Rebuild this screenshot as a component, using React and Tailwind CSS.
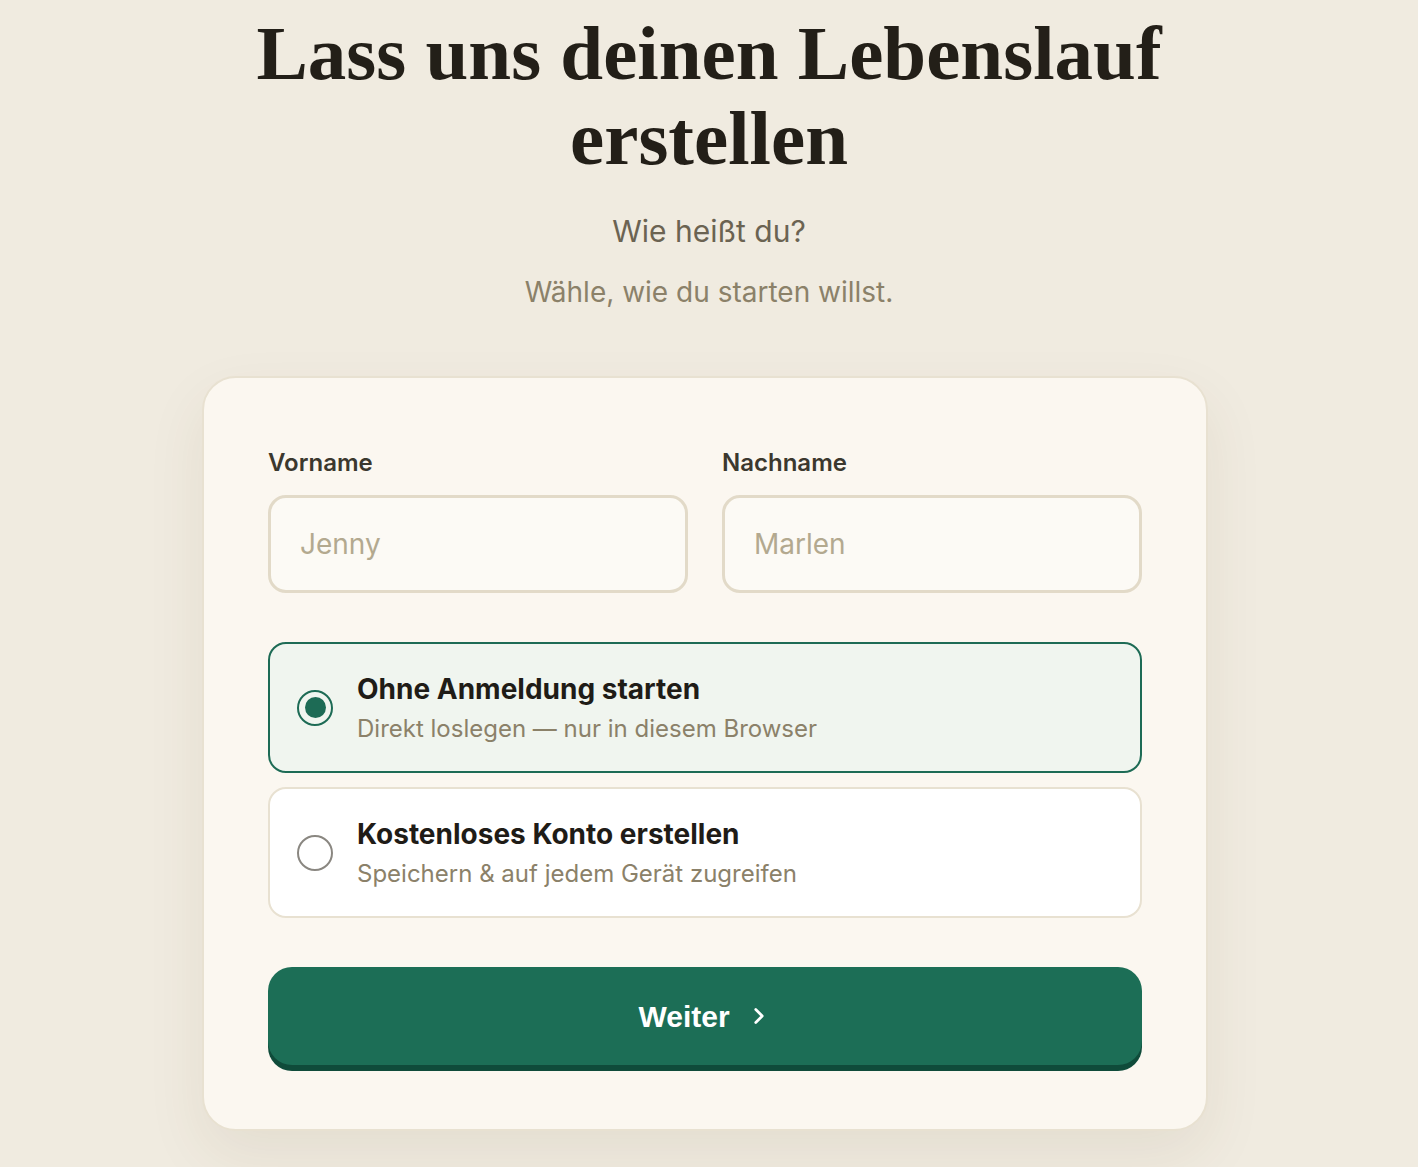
import React, { useState } from "react";
import { ChevronRight } from "lucide-react";

const options = [
  {
    id: "guest",
    title: "Ohne Anmeldung starten",
    desc: "Direkt loslegen — nur in diesem Browser",
  },
  {
    id: "account",
    title: "Kostenloses Konto erstellen",
    desc: "Speichern & auf jedem Gerät zugreifen",
  },
];

const sans = "font-['Inter','Noto_Sans',sans-serif]";

function NameField({ label, placeholder }) {
  return (
    <label className="flex flex-col">
      <span className="text-[24px] leading-[30px] font-semibold text-[#3b382e] mb-[17px]">
        {label}
      </span>
      <input
        className="h-[98px] rounded-[18px] border-[3px] border-[#e2dac8] bg-[#fcfaf5] px-[29px] text-[28px] text-[#3b382e] placeholder:text-[#b3a98f] outline-none"
        placeholder={placeholder}
      />
    </label>
  );
}

export default function App() {
  const [choice, setChoice] = useState("guest");

  return (
    <div className={`min-h-[1167px] bg-[#f0ebe0] flex flex-col items-center pt-[11px] ${sans}`}>
      <h1 className="font-['Liberation_Serif','Times_New_Roman',serif] font-bold text-[77px] leading-[85px] text-[#231f18] text-center max-w-[980px]">
        Lass uns deinen Lebenslauf erstellen
      </h1>
      <p className="mt-[30px] text-[30px] leading-[40px] text-[#6b6352]">Wie heißt du?</p>
      <p className="mt-[21px] text-[28px] leading-[40px] text-[#8b8169]">
        Wähle, wie du starten willst.
      </p>

      <div className="mt-[64px] mr-[8px] w-[1006px] rounded-[34px] border-2 border-[#e8e1d1] bg-[#fbf7f0] px-[64px] pt-[70px] pb-[64px] shadow-[0_24px_60px_rgba(90,70,30,0.08)]">
        <div className="grid grid-cols-2 gap-[34px]">
          <NameField label="Vorname" placeholder="Jenny" />
          <NameField label="Nachname" placeholder="Marlen" />
        </div>

        <div className="mt-[49px] flex flex-col gap-[14px]">
          {options.map((o) => {
            const active = choice === o.id;
            return (
              <button
                key={o.id}
                onClick={() => setChoice(o.id)}
                className={`h-[131px] flex items-center gap-[24px] rounded-[18px] border-2 px-[27px] text-left ${
                  active ? "border-[#1d6b55] bg-[#f0f5ef]" : "border-[#e8e1d1] bg-white"
                }`}
              >
                <span
                  className={`w-[36px] h-[36px] shrink-0 rounded-full border-2 flex items-center justify-center ${
                    active ? "border-[#1d6b55]" : "border-[#8a8781]"
                  }`}
                >
                  {active && <span className="w-[21px] h-[21px] rounded-full bg-[#1d6b55]" />}
                </span>
                <span className="flex flex-col">
                  <span className="text-[28px] leading-[38px] font-bold text-[#1f1c17]">{o.title}</span>
                  <span className="mt-[5px] text-[24px] leading-[32px] text-[#8b8169]">{o.desc}</span>
                </span>
              </button>
            );
          })}
        </div>

        <button className="mt-[49px] w-full h-[98px] rounded-[24px] bg-[#1c6e56] shadow-[0_6px_0_#0f4b3a] flex items-center justify-center gap-[16px] text-white">
          <span className="font-['Liberation_Sans',Arial,sans-serif] font-bold text-[30px]">Weiter</span>
          <ChevronRight size={26} strokeWidth={2.5} />
        </button>
      </div>
    </div>
  );
}
